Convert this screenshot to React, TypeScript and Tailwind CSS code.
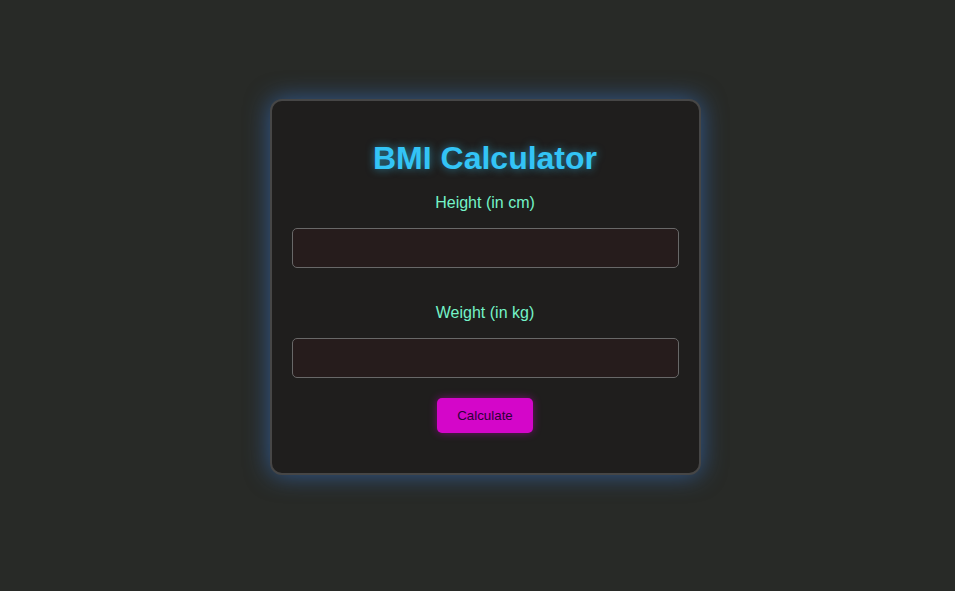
import React, { useState } from 'react';

// Simple BMI calculator card with a neon glow look.
const App: React.FC = () => {
  const [height, setHeight] = useState('');
  const [weight, setWeight] = useState('');
  const [result, setResult] = useState<string | null>(null);

  const calculate = () => {
    const h = parseFloat(height) / 100;
    const w = parseFloat(weight);
    if (!h || !w) return;
    setResult((w / (h * h)).toFixed(1));
  };

  return (
    <div className="min-h-screen bg-[#282a27] flex justify-center pt-[99px] pl-[15px] font-['Liberation_Sans',Arial,sans-serif]">
      <div className="w-[431px] h-[376px] box-border bg-[#1f1e1d] border-2 border-[#464646] rounded-[12px] px-[20px] pt-[18px] shadow-[0_0_24px_rgba(56,130,230,0.55)] text-center">
        <h1 className="mt-[21px] text-[32px] leading-[37px] font-bold text-[#33c4f6] [text-shadow:0_0_8px_rgba(51,196,246,0.6)]">
          BMI Calculator
        </h1>
        <label className="block mt-[17px] text-[16px] leading-[18px] text-[#74f3c8]">Height (in cm)</label>
        <input
          type="number"
          value={height}
          onChange={(e) => setHeight(e.target.value)}
          className="block w-full h-[40px] mt-[16px] bg-[#261c1c] border border-[#686868] rounded-[5px] px-2 text-white outline-none"
        />
        <label className="block mt-[36px] text-[16px] leading-[18px] text-[#74f3c8]">Weight (in kg)</label>
        <input
          type="number"
          value={weight}
          onChange={(e) => setWeight(e.target.value)}
          className="block w-full h-[40px] mt-[16px] bg-[#261c1c] border border-[#686868] rounded-[5px] px-2 text-white outline-none"
        />
        <button
          onClick={calculate}
          className="mt-[20px] w-[96px] h-[35px] bg-[#d406c9] text-[#2e0038] text-[13.33px] rounded-[5px] shadow-[0_0_8px_rgba(212,6,201,0.45)]"
        >
          Calculate
        </button>
        {result && <p className="mt-3 text-[#74f3c8]">Your BMI: {result}</p>}
      </div>
    </div>
  );
};

export default App;
